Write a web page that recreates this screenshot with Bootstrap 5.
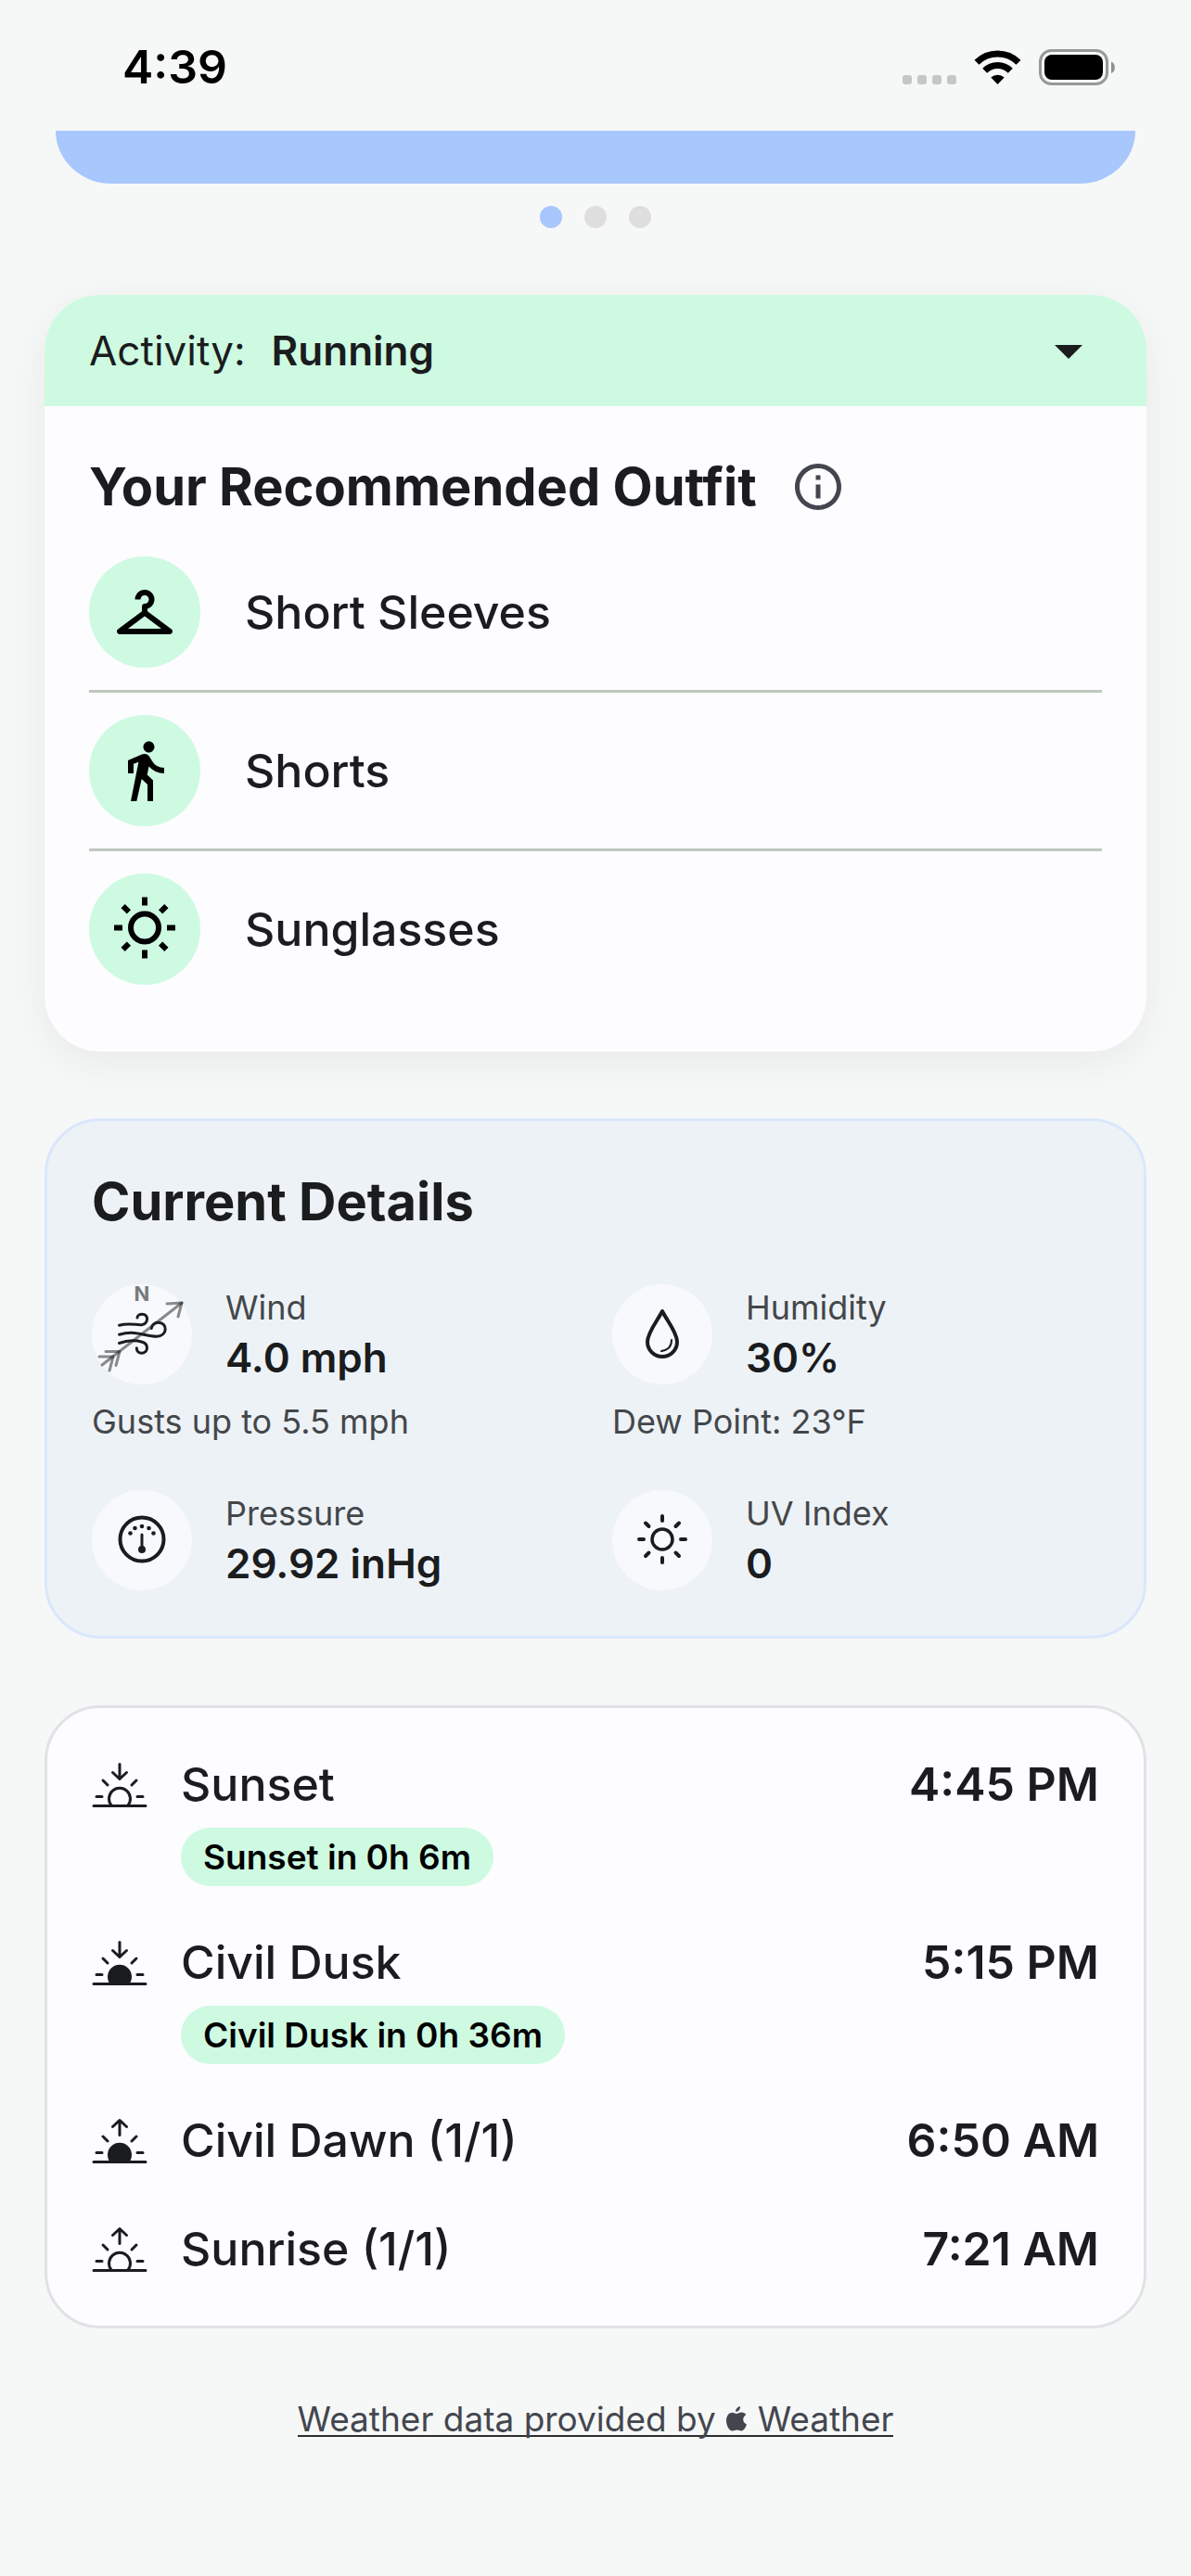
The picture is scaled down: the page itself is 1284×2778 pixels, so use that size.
<!DOCTYPE html>
<html lang="en">
<head>
<meta charset="utf-8">
<meta name="viewport" content="width=device-width, initial-scale=1">
<title>Running Weather</title>
<link href="https://cdn.jsdelivr.net/npm/bootstrap@5.3.0/dist/css/bootstrap.min.css" rel="stylesheet">
<style>
  body { background: #f6f8f7; color: #1a1c1e; font-family: Inter, "Liberation Sans", sans-serif; font-size: 50px; line-height: 69px; }
  .status-bar { height: 141px; padding: 4px 81px 0 132px; color: #000; font-weight: 600; }
  .forecast-card { height: 57px; margin: 0 60px; background: #a8c7fd; border-radius: 0 0 60px 60px / 0 0 57px 57px; }
  .pager { gap: 24px; margin: 24px 0 72px; }
  .pager-dot { width: 24px; height: 24px; padding: 0; border: 0; border-radius: 50%; background: #dedede; }
  .pager-dot.active { background: #a8c7fd; }
  .content-stack { gap: 72px; padding: 0 48px; }
  .panel { border: 0; border-radius: 60px; background: #fdfcff; color: inherit; }
  .outfit-panel { overflow: hidden; box-shadow: 0 12px 48px rgba(0, 0, 0, .06); }
  .activity-bar { height: 120px; padding: 0 48px; gap: 28px; background: #cefae2; font-size: 44px; }
  .activity-bar label { font-weight: 400; }
  .activity-pick { border: 0; background: transparent; appearance: none; color: inherit; font-weight: 600; padding: 0; line-height: 60px; }
  .outfit-body { padding: 48px 48px 72px; }
  .panel-title { font-size: 56px; line-height: 78px; font-weight: 700; }
  .outfit-head { gap: 36px; margin: 0 0 36px; }
  .outfit-item { gap: 48px; padding: 24px 0; border-bottom: 3px solid #c0c8be; font-weight: 500; }
  .outfit-item:first-child { padding-top: 0; }
  .outfit-item:last-child { padding-bottom: 0; border-bottom: 0; }
  .outfit-icon { width: 120px; height: 120px; background: #cefae2; color: #000; }
  .details-panel { border: 3px solid #dae7fb; background: #edf2f7; padding: 48px 12px 48px 48px; }
  .details-grid { row-gap: 45px; margin-top: 48px; }
  .metric { gap: 36px; }
  .metric-icon { width: 108px; height: 108px; background: #f8f9fc; }
  .metric-icon svg { overflow: visible; }
  .quiet { font-size: 36px; line-height: 54px; color: #44474a; }
  .metric-value { padding-bottom: 3px; font-size: 44px; line-height: 54px; font-weight: 600; }
  .metric-note { margin-top: 12px; }
  .sun-panel { border: 3px solid #e1e2e6; padding: 48px; gap: 48px; }
  .sun-row { gap: 36px; }
  .sun-name { font-weight: 500; }
  .sun-time { font-weight: 600; }
  .countdown { margin-top: 12px; padding: 0 24px; border-radius: 32px; background: #cefae2; color: #000; font-size: 37px; line-height: 63px; font-weight: 600; }
  .credit { padding: 81px 48px 120px; }
  .credit a { border-bottom: 2px solid #2c2d2c; color: #44464f; font-size: 37px; line-height: 34px; }
  svg { display: block; flex: none; }
</style>
</head>
<body>
<header class="status-bar d-flex align-items-center justify-content-between">
  <span>4:39</span>
  <span class="d-flex align-items-center">
    <svg width="230" height="40" viewBox="0 0 230 40" aria-hidden="true">
      <g fill="#c5c7c6"><rect x="0" y="28" width="10" height="10" rx="3"/><rect x="16" y="28" width="10" height="10" rx="3"/><rect x="32" y="28" width="10" height="10" rx="3"/><rect x="48" y="28" width="10" height="10" rx="3"/></g>
      <path d="M102.500 38 L95.300 30.500 A10.500 10.500 0 0 1 109.700 30.500 Z"/>
      <g fill="none" stroke="#000" stroke-width="7"><path d="M88.700 23.200 A19.500 19.500 0 0 1 116.300 23.200"/><path d="M80 14.300 A32 32 0 0 1 125 14.300"/></g>
      <rect x="148.500" y="1.500" width="72" height="36" rx="12" fill="none" stroke="#979998" stroke-width="3"/>
      <rect x="153" y="6" width="63" height="27" rx="8"/>
      <path d="M225 13.500 A7 7 0 0 1 225 26 Z" fill="#8e908f"/>
    </svg>
  </span>
</header>

<section class="forecast-card" aria-label="Forecast"></section>
<nav class="pager d-flex justify-content-center" aria-label="Forecast pages">
  <button class="pager-dot active" type="button" aria-label="Page 1"></button>
  <button class="pager-dot" type="button" aria-label="Page 2"></button>
  <button class="pager-dot" type="button" aria-label="Page 3"></button>
</nav>

<main class="content-stack d-flex flex-column">
  <section class="card panel outfit-panel">
    <div class="activity-bar d-flex align-items-center">
      <label for="activity">Activity:</label>
      <select id="activity" class="activity-pick flex-grow-1"><option selected>Running</option></select>
      <svg width="72" height="72" viewBox="0 0 24 24" fill="currentColor" aria-hidden="true"><path d="M7 10l5 5 5-5z"/></svg>
    </div>
    <div class="outfit-body">
      <div class="outfit-head d-flex align-items-center">
        <h2 class="panel-title mb-0">Your Recommended Outfit</h2>
        <button type="button" class="btn p-0 border-0" aria-label="About this outfit">
          <svg width="60" height="60" viewBox="0 0 24 24" fill="#44464f" aria-hidden="true"><path d="M11 7h2v2h-2zm0 4h2v6h-2zm1-9C6.480 2 2 6.480 2 12s4.480 10 10 10 10-4.480 10-10S17.520 2 12 2zm0 18c-4.410 0-8-3.590-8-8s3.590-8 8-8 8 3.590 8 8-3.590 8-8 8z"/></svg>
        </button>
      </div>
      <ul class="list-unstyled mb-0">
        <li class="outfit-item d-flex align-items-center">
          <span class="outfit-icon rounded-circle d-flex align-items-center justify-content-center flex-shrink-0"><svg width="72" height="72" viewBox="0 0 24 24" fill="currentColor" aria-hidden="true"><path d="M21.600 18.200 13 11.750v-.91c1.650-.49 2.800-2.170 2.430-4.050-.26-1.310-1.300-2.400-2.610-2.700C10.540 3.570 8.500 5.300 8.500 7.500h2c0-.83.670-1.500 1.500-1.500s1.500.670 1.500 1.500c0 .84-.69 1.520-1.530 1.500-.54-.01-.97.450-.97.990v1.760L2.400 18.200c-.77.580-.36 1.800.6 1.800h18c.960 0 1.370-1.220.6-1.800zM6 18l6-4.500 6 4.500H6z"/></svg></span>
          Short Sleeves
        </li>
        <li class="outfit-item d-flex align-items-center">
          <span class="outfit-icon rounded-circle d-flex align-items-center justify-content-center flex-shrink-0"><svg width="72" height="72" viewBox="0 0 24 24" fill="currentColor" aria-hidden="true"><path d="M13.500 5.500c1.100 0 2-.9 2-2s-.9-2-2-2-2 .9-2 2 .9 2 2 2zM9.800 8.900 7 23h2.100l1.800-8 2.100 2v6h2v-7.500l-2.100-2 .6-3C14.800 12 16.800 13 19 13v-2c-1.900 0-3.500-1-4.300-2.400l-1-1.600c-.4-.6-1-1-1.700-1-.3 0-.5.100-.8.100L6 8.300V13h2V9.600l1.800-.7z"/></svg></span>
          Shorts
        </li>
        <li class="outfit-item d-flex align-items-center">
          <span class="outfit-icon rounded-circle d-flex align-items-center justify-content-center flex-shrink-0"><svg width="72" height="72" viewBox="0 0 24 24" fill="none" stroke="currentColor" stroke-width="2" aria-hidden="true"><circle cx="12" cy="11.500" r="5"/><path d="M12 .5v3M12 19.500v3M1 11.500h3M20 11.500h3M4.200 3.700l2.100 2.100M17.700 17.200l2.100 2.100M4.200 19.300l2.100-2.100M17.700 5.800l2.100-2.100"/></svg></span>
          Sunglasses
        </li>
      </ul>
    </div>
  </section>

  <section class="card panel details-panel">
    <h2 class="panel-title mb-0">Current Details</h2>
    <div class="details-grid row gx-0">
      <div class="col-6">
        <div class="metric d-flex align-items-center">
          <span class="metric-icon rounded-circle flex-shrink-0">
            <svg width="108" height="108" viewBox="0 0 108 108" fill="none" stroke-linecap="round" stroke-linejoin="round" aria-hidden="true">
              <text x="54" y="18" text-anchor="middle" font-size="22" font-weight="700" fill="#77797b">N</text>
              <g stroke="#000" stroke-opacity=".45" stroke-width="3"><path d="M11 87 97 20"/><path d="M81 21l16-1-4 15"/><path d="M15 72.500h15l-4 15"/><path d="M8 78h15l-4 15"/></g>
              <g stroke="#1a1c1e" stroke-width="3"><path d="M29.500 44.200C41 41 49 44.500 54.500 43.500C61 42 61.500 32.200 54.300 32.200C51 32.200 49 34 49 36"/><path d="M29.500 54.200C48 49 58 56.500 70 56.200C82 56 82 41.200 71.700 41.200C67.500 41.200 64.500 44 64.300 47.500"/><path d="M29.500 63.500C38 60.500 48 60.500 54.300 62.200C62 64.500 60.500 74.200 53.700 74.200C50.500 74.200 48.300 72 48.300 68.800"/></g>
            </svg>
          </span>
          <div><div class="quiet">Wind</div><div class="metric-value">4.0 mph</div></div>
        </div>
        <div class="quiet metric-note">Gusts up to 5.5 mph</div>
      </div>
      <div class="col-6">
        <div class="metric d-flex align-items-center">
          <span class="metric-icon rounded-circle flex-shrink-0">
            <svg width="108" height="108" viewBox="0 0 108 108" fill="none" stroke="#1a1c1e" stroke-linecap="round" stroke-linejoin="round" aria-hidden="true"><path stroke-width="4" d="M54 29C49 39 38 52 38 62a16 16 0 0 0 32 0C70 52 59 39 54 29z"/><path stroke-width="2" d="M64 60c0 7-4 11-11 12"/></svg>
          </span>
          <div><div class="quiet">Humidity</div><div class="metric-value">30%</div></div>
        </div>
        <div class="quiet metric-note">Dew Point: 23°F</div>
      </div>
      <div class="col-6">
        <div class="metric d-flex align-items-center">
          <span class="metric-icon rounded-circle flex-shrink-0">
            <svg width="108" height="108" viewBox="0 0 108 108" fill="none" aria-hidden="true"><circle cx="54" cy="53" r="23.500" stroke="#1a1c1e" stroke-width="4"/><path d="M54 48v16" stroke="#1a1c1e" stroke-width="3" stroke-linecap="round"/><g fill="#1a1c1e"><circle cx="54" cy="64" r="4"/><circle cx="41.500" cy="46.500" r="2.300"/><circle cx="46.500" cy="41" r="2.300"/><circle cx="54" cy="39" r="2.300"/><circle cx="61.500" cy="41" r="2.300"/><circle cx="66.500" cy="46.500" r="2.300"/></g></svg>
          </span>
          <div><div class="quiet">Pressure</div><div class="metric-value">29.92 inHg</div></div>
        </div>
      </div>
      <div class="col-6">
        <div class="metric d-flex align-items-center">
          <span class="metric-icon rounded-circle flex-shrink-0">
            <svg width="108" height="108" viewBox="0 0 108 108" fill="none" stroke="#1a1c1e" stroke-width="4" stroke-linecap="round" aria-hidden="true"><circle cx="54" cy="53" r="11" stroke-width="3.500"/><path d="M54 28v5M54 73v5M29 53h5M74 53h5M36 35.500l3.500 3.500M68.500 67.500l3.500 3.500M36 71l3.500-3.500M68.500 39l3.500-3.500"/></svg>
          </span>
          <div><div class="quiet">UV Index</div><div class="metric-value">0</div></div>
        </div>
      </div>
    </div>
  </section>

  <section class="card panel sun-panel" aria-label="Sun times">
    <div class="sun-row d-flex align-items-start">
      <svg width="60" height="69" viewBox="0 0 60 69" fill="none" stroke="#1a1c1e" stroke-width="3" stroke-linecap="round" stroke-linejoin="round" aria-hidden="true"><path d="M2 57.500h56M21 57a11.500 11.500 0 1 1 18 0M5 47.500h6M49 47.500h6M12 30l5 5M48 30l-5 5M30 12.500v16M22.500 21.500 30 28.500l7.500-7"/></svg>
      <div class="flex-grow-1"><div class="sun-name">Sunset</div><div class="d-flex"><span class="countdown">Sunset in 0h 6m</span></div></div>
      <div class="sun-time">4:45 PM</div>
    </div>
    <div class="sun-row d-flex align-items-start">
      <svg width="60" height="69" viewBox="0 0 60 69" fill="none" stroke="#1a1c1e" stroke-width="3" stroke-linecap="round" stroke-linejoin="round" aria-hidden="true"><path fill="#1a1c1e" d="M21 57a11.500 11.500 0 1 1 18 0z"/><path d="M2 57.500h56M5 47.500h6M49 47.500h6M12 30l5 5M48 30l-5 5M30 12.500v16M22.500 21.500 30 28.500l7.500-7"/></svg>
      <div class="flex-grow-1"><div class="sun-name">Civil Dusk</div><div class="d-flex"><span class="countdown">Civil Dusk in 0h 36m</span></div></div>
      <div class="sun-time">5:15 PM</div>
    </div>
    <div class="sun-row d-flex align-items-start">
      <svg width="60" height="69" viewBox="0 0 60 69" fill="none" stroke="#1a1c1e" stroke-width="3" stroke-linecap="round" stroke-linejoin="round" aria-hidden="true"><path fill="#1a1c1e" d="M21 57a11.500 11.500 0 1 1 18 0z"/><path d="M2 57.500h56M5 47.500h6M49 47.500h6M12 30l5 5M48 30l-5 5M30 28.500v-16M22.500 19.500 30 12.500l7.500 7"/></svg>
      <div class="flex-grow-1 sun-name">Civil Dawn (1/1)</div>
      <div class="sun-time">6:50 AM</div>
    </div>
    <div class="sun-row d-flex align-items-start">
      <svg width="60" height="69" viewBox="0 0 60 69" fill="none" stroke="#1a1c1e" stroke-width="3" stroke-linecap="round" stroke-linejoin="round" aria-hidden="true"><path d="M2 57.500h56M21 57a11.500 11.500 0 1 1 18 0M5 47.500h6M49 47.500h6M12 30l5 5M48 30l-5 5M30 28.500v-16M22.500 19.500 30 12.500l7.500 7"/></svg>
      <div class="flex-grow-1 sun-name">Sunrise (1/1)</div>
      <div class="sun-time">7:21 AM</div>
    </div>
  </section>
</main>

<footer class="credit d-flex justify-content-center quiet">
  <a class="text-decoration-none" href="#">Weather data provided by <svg class="d-inline-block align-baseline" width="24" height="27" viewBox="0 0 24 27" fill="#44464f" aria-hidden="true"><path d="M16 0c.3 3-2 6-5 6 0-3 2-5.500 5-6zM12 8c1.500 0 3-1.500 5.500-1.500 2 0 3.800 1 4.800 2.500-4.500 3-3.800 8.500.7 10.500-1 3-3.200 7-5.500 7-2 0-2.600-1-5-1s-3 1-5 1C4 26.500 1 20.500 1 15.500 1 10 4.200 6.700 7.500 6.700 9.500 6.700 11 8 12 8z"/></svg> Weather</a>
</footer>
<script src="https://cdn.jsdelivr.net/npm/bootstrap@5.3.0/dist/js/bootstrap.bundle.min.js"></script>
</body>
</html>
